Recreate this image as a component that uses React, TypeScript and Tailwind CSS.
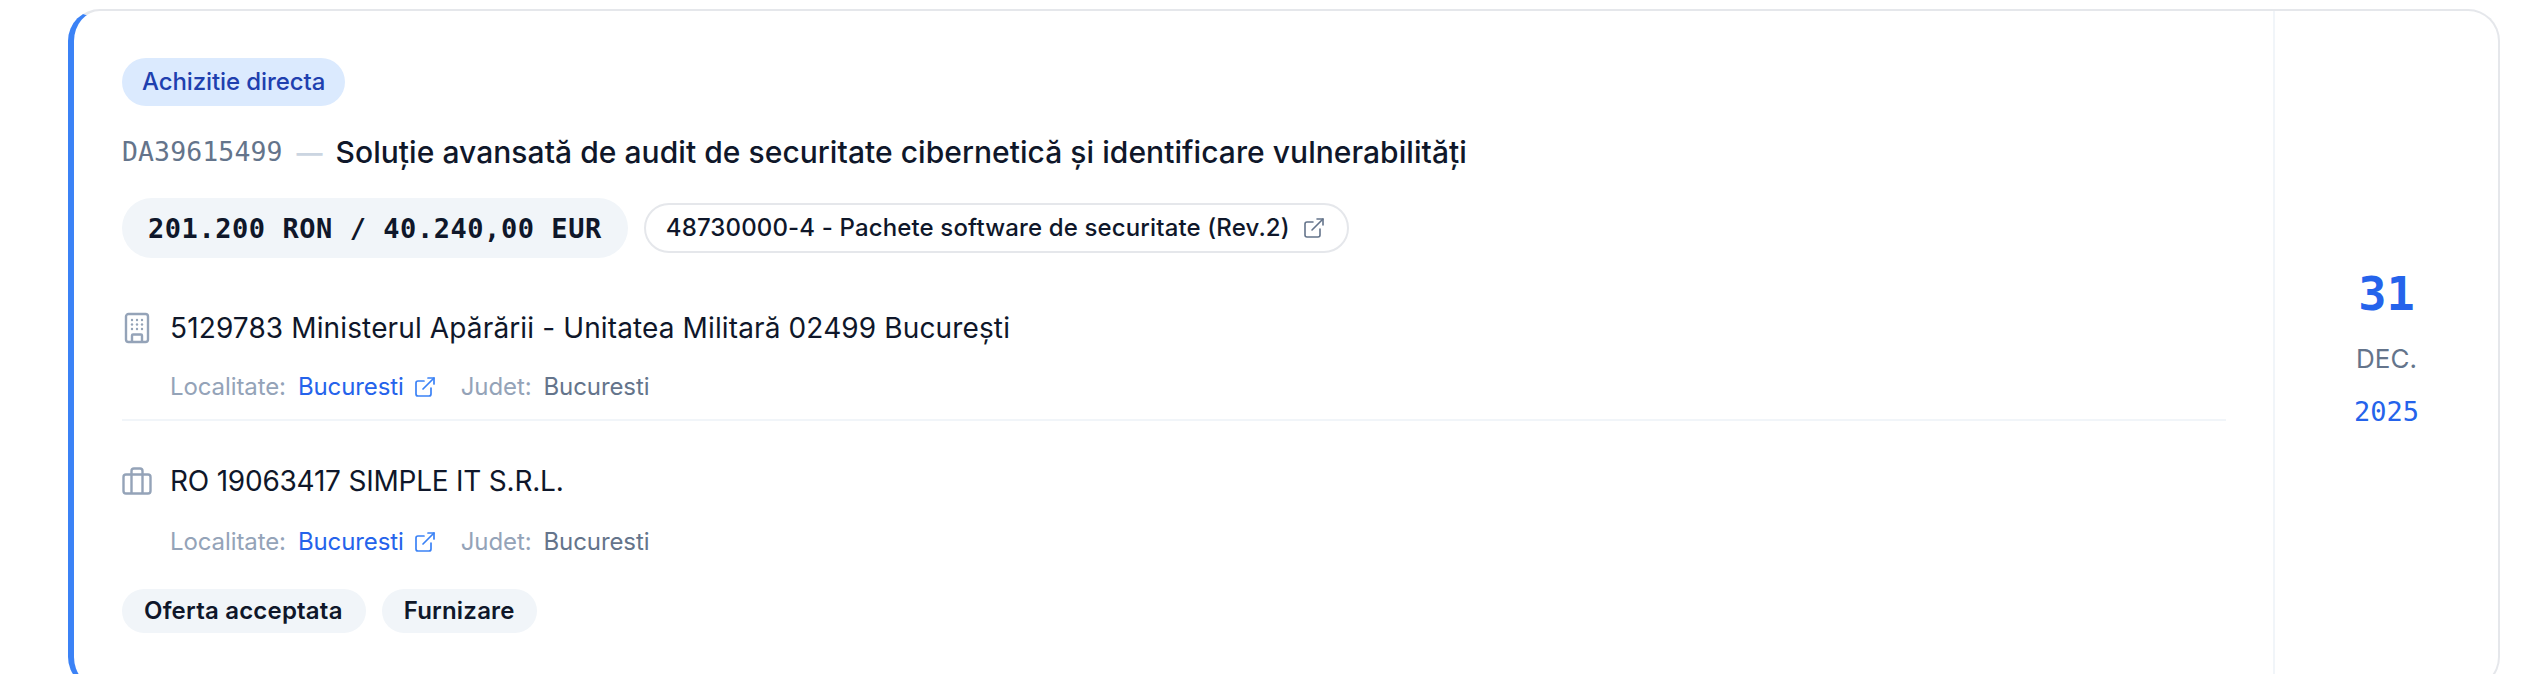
import React from 'react';
import { ExternalLink } from 'lucide-react';

const BuildingIcon = () => (
  <svg width="30" height="32" viewBox="0 0 30 32" fill="none" className="shrink-0 text-[#94a3b8]">
    <rect x="4" y="2" width="22" height="28" rx="2.5" stroke="currentColor" strokeWidth="2.4" />
    {[8, 12.5, 17].map(y =>
      [10, 15, 20].map(x => <circle key={`${x}-${y}`} cx={x} cy={y} r="1.2" fill="currentColor" />)
    )}
    <path d="M10 30v-6.5a1 1 0 0 1 1-1h8a1 1 0 0 1 1 1V30" stroke="currentColor" strokeWidth="2.4" />
  </svg>
);

const SuitcaseIcon = () => (
  <svg width="30" height="28" viewBox="0 0 30 28" fill="none" className="shrink-0 text-[#94a3b8]">
    <rect x="1.5" y="7.5" width="27" height="19" rx="2.5" stroke="currentColor" strokeWidth="2.4" />
    <path d="M9.5 26.5V4a2.5 2.5 0 0 1 2.5-2.5h6A2.5 2.5 0 0 1 20.5 4v22.5" stroke="currentColor" strokeWidth="2.4" />
  </svg>
);

const Party = ({ icon, name, nameClass, metaClass }: { icon: React.ReactNode; name: string; nameClass: string; metaClass: string }) => (
  <div>
    <div className="flex items-center h-[36px]">
      <div className="w-[49px] flex items-center">{icon}</div>
      <span className={`text-[28px] text-[#0f172a] -ml-[1px] ${nameClass}`}>{name}</span>
    </div>
    <div className={`flex items-center h-[30px] pl-[48px] text-[24px] tracking-[-0.1px] ${metaClass}`}>
      <span className="text-[#94a3b8]">Localitate:</span>
      <span className="text-[#2563eb] ml-[12px]">Bucuresti</span>
      <ExternalLink size={24} strokeWidth={1.7} className="text-[#3b82f6] ml-[9px]" />
      <span className="text-[#94a3b8] ml-[24px]">Judet:</span>
      <span className="text-[#64748b] ml-[12px]">Bucuresti</span>
    </div>
  </div>
);

const App: React.FC = () => {
  return (
    <div className="h-[674px] overflow-hidden bg-white pt-[9px] pl-[68px] pr-[24px] font-['Inter',sans-serif]">
      <div className="flex h-[680px] rounded-[32px] border-2 border-[#e5e7eb] border-l-[6px] border-l-[#3b82f6] bg-white">
        <div className="flex-1 pl-[48px] pr-[47px] pt-[47px]">
          <span className="inline-flex items-center h-[48px] px-[20px] rounded-full bg-[#dbeafe] text-[#1e40af] text-[24px] font-medium tracking-[-0.1px]">
            Achizitie directa
          </span>

          <div className="flex items-center h-[40px] mt-[26px]">
            <span className="font-['DejaVu_Sans_Mono',monospace] text-[26.5px] text-[#64748b] tracking-[0.1px]">DA39615499</span>
            <span className="text-[26px] font-semibold text-[#cbd5e1] ml-[14px]">—</span>
            <span className="text-[30px] font-medium text-[#0f172a] ml-[13px] tracking-[0.05px]">
              Soluție avansată de audit de securitate cibernetică și identificare vulnerabilități
            </span>
          </div>

          <div className="flex items-center mt-[26px] gap-[16px]">
            <span className="inline-flex items-center h-[60px] pt-[3px] px-[26px] rounded-full bg-[#f1f5f9] font-['DejaVu_Sans_Mono',monospace] text-[27px] font-bold text-[#0f172a] tracking-[0.55px]">
              201.200 RON / 40.240,00 EUR
            </span>
            <span className="inline-flex items-center h-[50px] pl-[20px] pr-[21px] rounded-full border-2 border-[#e5e7eb] text-[24px] font-medium text-[#0f172a] tracking-[0.14px]">
              48730000-4 - Pachete software de securitate (Rev.2)
              <ExternalLink size={24} strokeWidth={1.6} className="text-[#64748b] ml-[12px]" />
            </span>
          </div>

          <div className="mt-[52px] pb-[17px] border-b-2 border-[#f1f5f9]">
            <Party
              icon={<BuildingIcon />}
              name="5129783 Ministerul Apărării - Unitatea Militară 02499 București"
              nameClass="tracking-[0.13px]"
              metaClass="mt-[26px]"
            />
          </div>
          <div className="mt-[42px]">
            <Party
              icon={<SuitcaseIcon />}
              name="RO 19063417 SIMPLE IT S.R.L."
              nameClass="tracking-[-0.22px]"
              metaClass="mt-[28px]"
            />
          </div>

          <div className="flex gap-[16px] mt-[32px]">
            <span className="inline-flex items-center h-[44px] pl-[22px] pr-[23px] rounded-full bg-[#f1f5f9] text-[24px] font-semibold text-[#0f172a] tracking-[0.2px]">Oferta acceptata</span>
            <span className="inline-flex items-center h-[44px] px-[22px] rounded-full bg-[#f1f5f9] text-[24px] font-semibold text-[#0f172a] tracking-[0.2px]">Furnizare</span>
          </div>
        </div>

        <div className="w-[225px] shrink-0 border-l-2 border-[#f1f5f9] flex flex-col items-center pt-[259px] font-['DejaVu_Sans_Mono',monospace]">
          <span className="text-[47px] leading-[48px] font-bold text-[#2563eb]">31</span>
          <span className="text-[26px] leading-[30px] mt-[26px] text-[#64748b] font-['Inter',sans-serif]">DEC.</span>
          <span className="text-[27px] leading-[30px] mt-[23px] text-[#2563eb]">2025</span>
        </div>
      </div>
    </div>
  );
};

export default App;
